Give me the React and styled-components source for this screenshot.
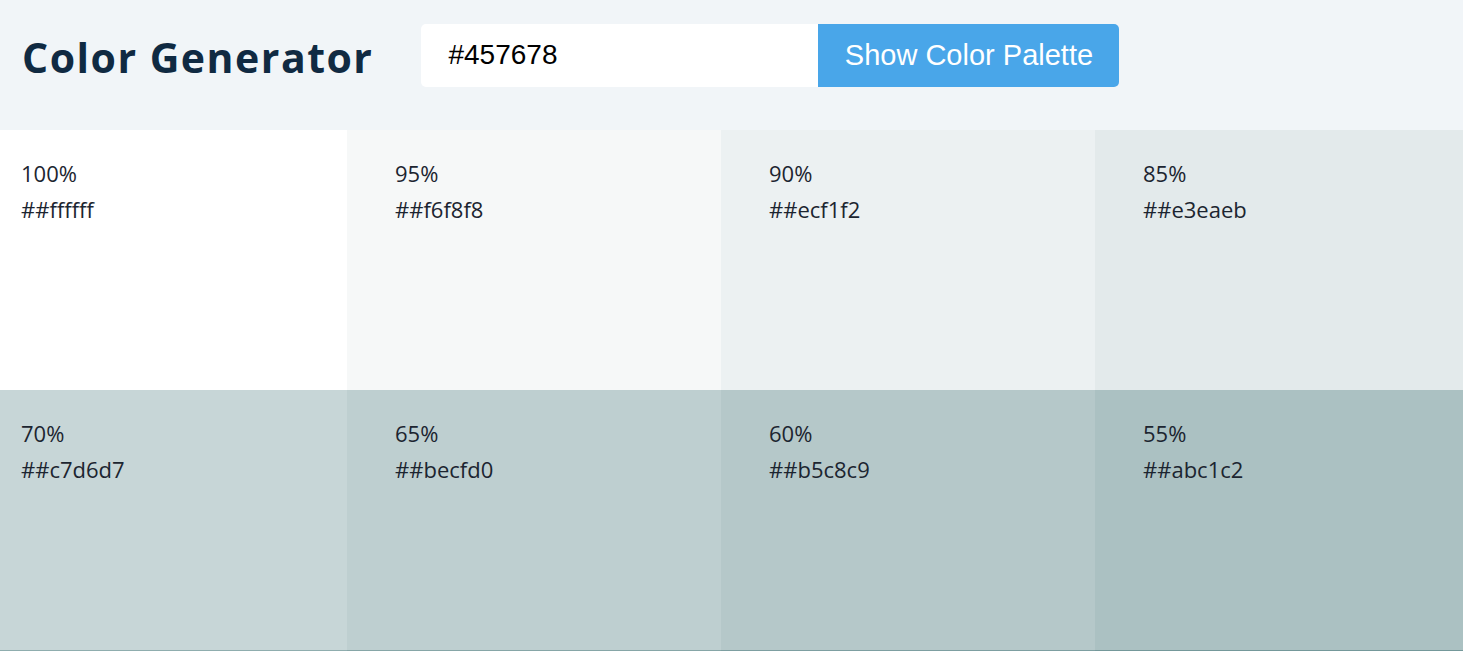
import React from 'react';
import styled, { createGlobalStyle } from 'styled-components';

const GlobalStyle = createGlobalStyle`
  *, *::before, *::after { box-sizing: border-box; }
  html, body {
    margin: 0;
    padding: 0;
    overflow: hidden;
    background: #f1f5f8;
    font-family: "Open Sans", "Noto Sans", sans-serif;
    color: #102a42;
  }
`;

const Header = styled.section`
  display: flex;
  align-items: center;
  height: 130px;
  padding: 0 22px 20px;
  background: #f1f5f8;
`;

const Title = styled.h3`
  margin: 0 48px 0 0;
  font-size: 41px;
  font-weight: 700;
  letter-spacing: 1.5px;
  line-height: 1.2;
  color: #102a42;
  position: relative;
  top: 3px;
`;

const Form = styled.form`
  display: flex;
`;

const Input = styled.input`
  width: 397px;
  height: 63px;
  border: none;
  outline: none;
  border-radius: 5px 0 0 5px;
  background: #fff;
  padding: 0 27px;
  font-family: "Liberation Sans", Arial, sans-serif;
  font-size: 28px;
  color: #000;
`;

const Button = styled.button`
  width: 301px;
  height: 63px;
  border: none;
  border-radius: 0 5px 5px 0;
  background: #49a6e9;
  color: #fff;
  font-family: "Liberation Sans", Arial, sans-serif;
  font-size: 29px;
  cursor: pointer;
`;

const Grid = styled.section`
  display: grid;
  grid-template-columns: repeat(6, 374px);
  grid-auto-rows: 260px;
  width: max-content;
  margin-left: -27px;
`;

const Swatch = styled.article`
  background: ${({ $bg }) => $bg};
  padding: 25px 48px;
  color: ${({ $dark }) => ($dark ? '#fff' : '#1c2530')};
  font-size: 22px;
  line-height: 36px;

  p {
    margin: 0;
  }
`;

const hex = (n) => Math.round(n).toString(16).padStart(2, '0');

const buildColors = (base) => {
  const list = [];
  for (let w = 100; w >= 0; w -= 5) {
    const mix = base.map((c) => c + (255 - c) * (w / 100));
    list.push({ weight: w, hex: mix.map(hex).join(''), dark: false });
  }
  for (let w = 5; w <= 100; w += 5) {
    const mix = base.map((c) => c * (1 - w / 100));
    list.push({ weight: w, hex: mix.map(hex).join(''), dark: true });
  }
  return list;
};

const colors = buildColors([0x45, 0x76, 0x78]);

export default function App() {
  return (
    <>
      <GlobalStyle />
      <Header>
        <Title>Color Generator</Title>
        <Form onSubmit={(e) => e.preventDefault()}>
          <Input type="text" defaultValue="#457678" />
          <Button type="submit">Show Color Palette</Button>
        </Form>
      </Header>
      <Grid>
        {colors.map((c, i) => (
          <Swatch key={i} $bg={`#${c.hex}`} $dark={c.dark}>
            <p>{c.weight}%</p>
            <p>##{c.hex}</p>
          </Swatch>
        ))}
      </Grid>
    </>
  );
}
